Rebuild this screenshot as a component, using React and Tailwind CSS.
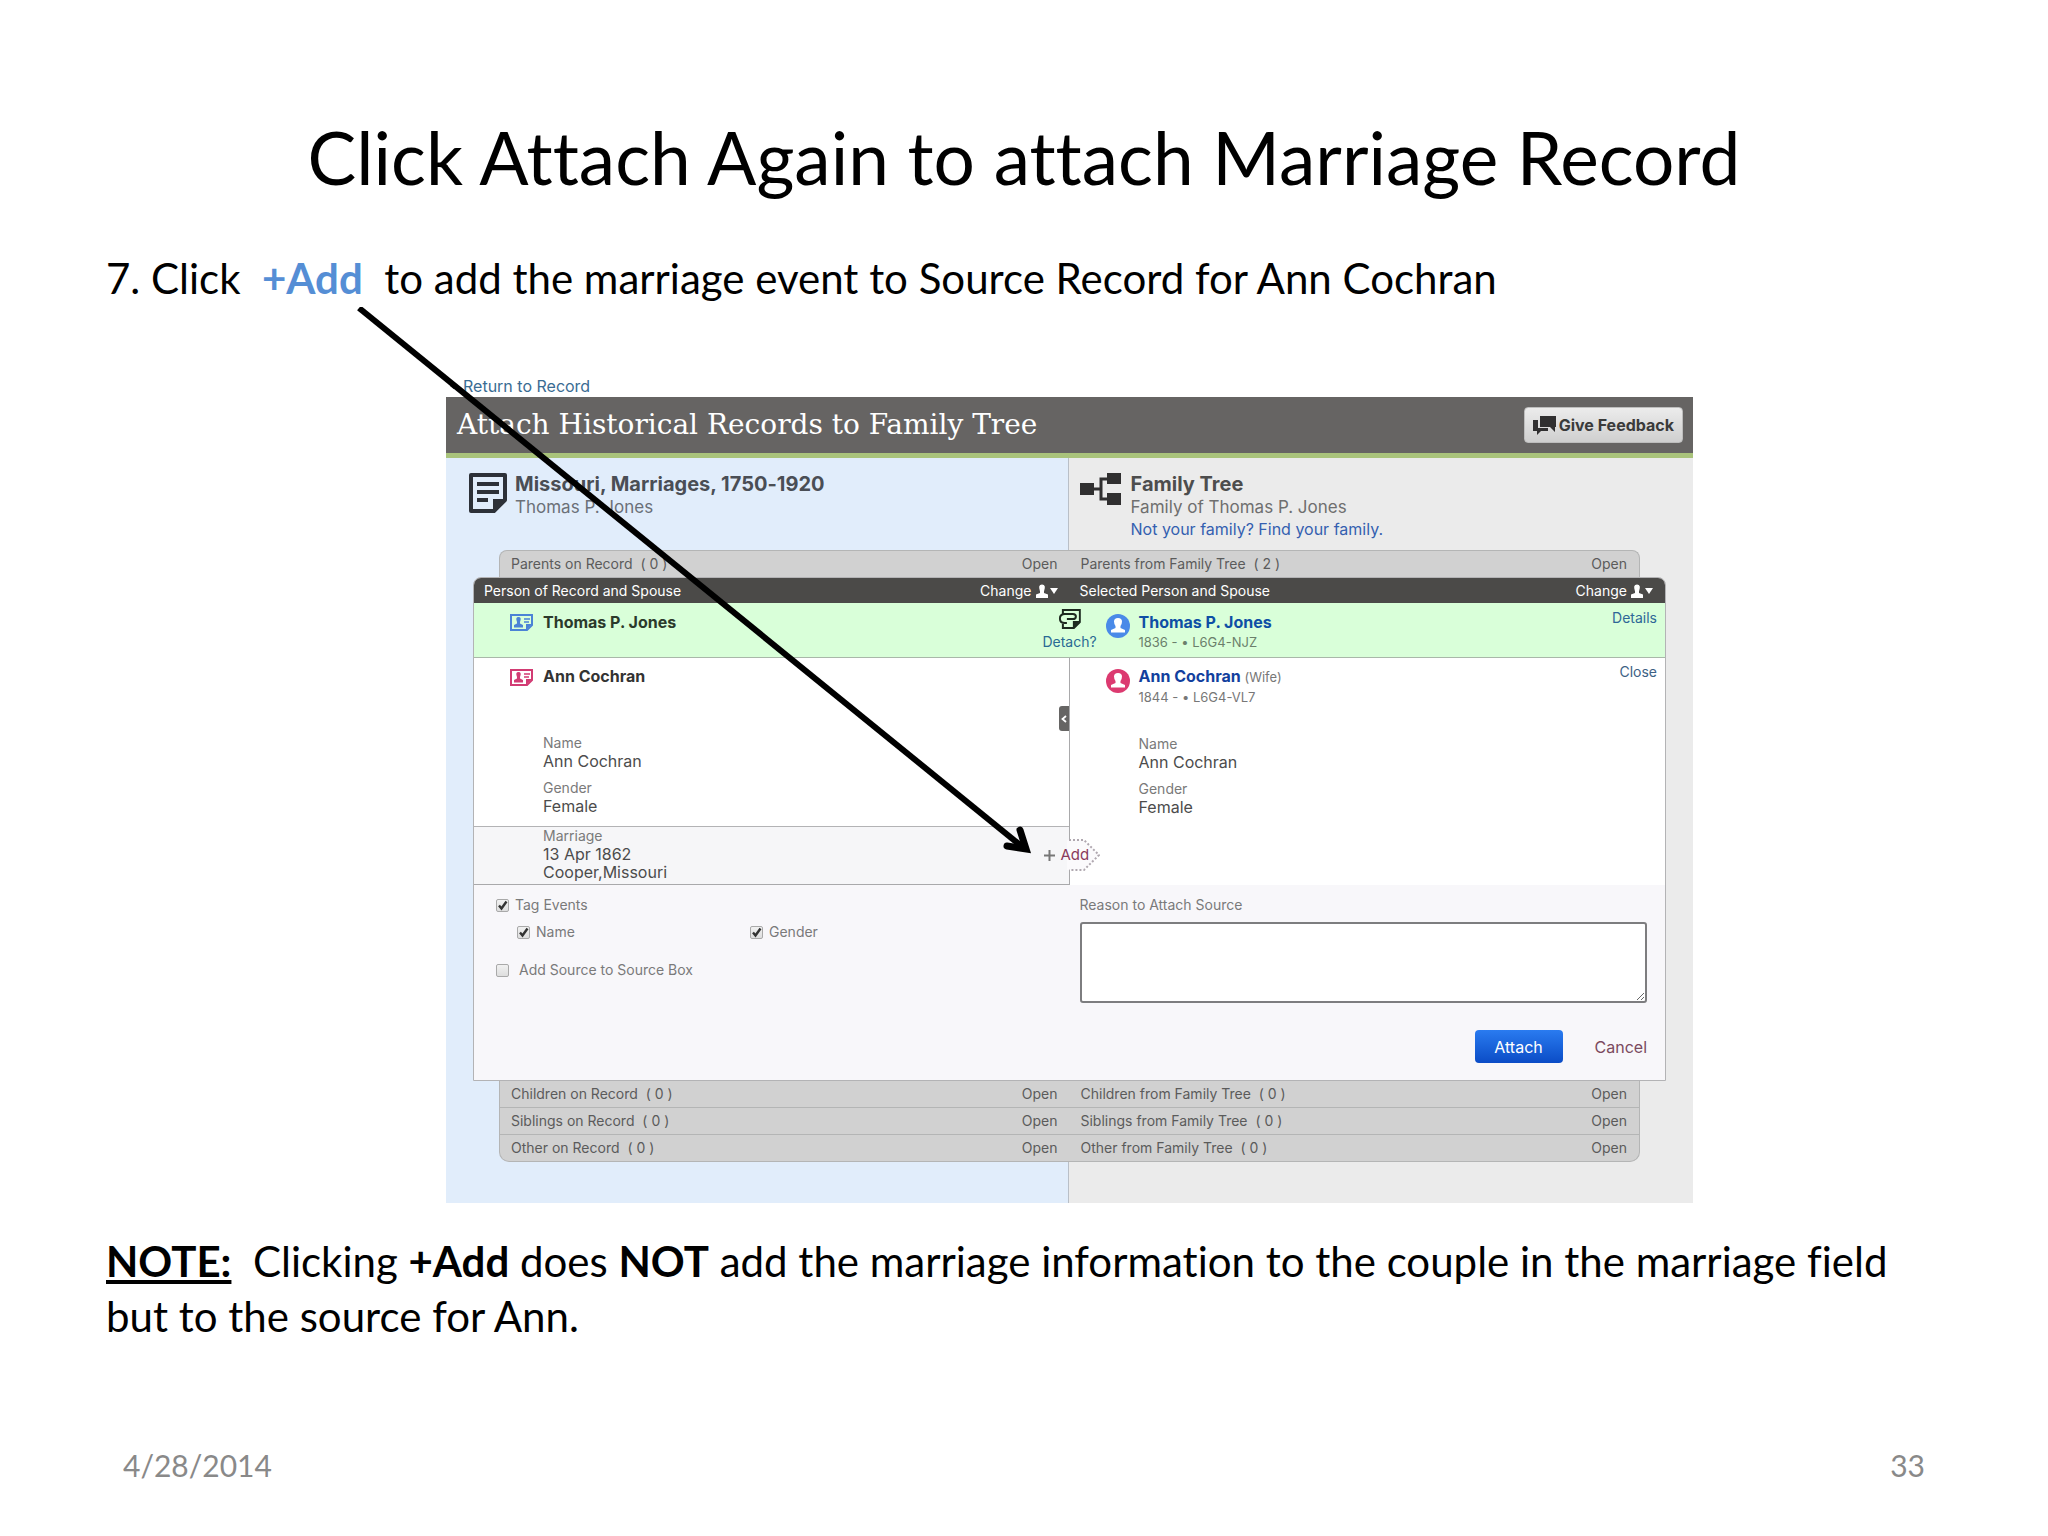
import React from "react";

const SANS = "font-['Inter','Liberation_Sans',sans-serif]";

function RecordIcon({ className }) {
  return (
    <svg viewBox="0 0 38 40" className={className} aria-hidden="true">
      <path d="M2 2h34v25L25 38H2z" fill="none" stroke="#2d3138" strokeWidth="4" strokeLinejoin="round" />
      <path d="M8 11h22M8 19h22M8 27h11" stroke="#2d3138" strokeWidth="4" />
      <path d="M24 39V26h13v2L26 39z" fill="#2d3138" />
    </svg>
  );
}

function TreeIcon({ className }) {
  return (
    <svg viewBox="0 0 41 32" className={className} aria-hidden="true">
      <path d="M12 16h10M28 6h-7v20h7" fill="none" stroke="#302f30" strokeWidth="3" />
      <path d="M0 10h14v12H0zM27 0h14v11H27zM27 20h14v12H27z" fill="#302f30" />
    </svg>
  );
}

function CardIcon({ className }) {
  return (
    <svg viewBox="0 0 23 17" className={className} fill="none" aria-hidden="true">
      <path d="M1 1h21v10l-5 5H1z" stroke="currentColor" strokeWidth="2" />
      <path d="M16 16v-6h6z" fill="currentColor" />
      <path d="M4 13.500v-2.500l3-1.500V8Q5 3 8.500 3T10 8v1.500l3 1.500v2.500z" fill="currentColor" />
      <path d="M14 5h6M14 8h5" stroke="currentColor" strokeWidth="1.500" />
    </svg>
  );
}

function Avatar({ className }) {
  return (
    <svg viewBox="0 0 24 24" className={className} aria-hidden="true">
      <circle cx="12" cy="12" r="12" fill="currentColor" />
      <path d="M5 18.500v-2.500l4.500-2V12Q8 10 8 7.500Q8 4 12 4t4 3.500Q16 10 14.500 12v2l4.500 2v2.500z" fill="#fff" />
    </svg>
  );
}

function DetachIcon({ className }) {
  return (
    <svg viewBox="0 0 22 21" className={className} fill="none" stroke="#1d2a1f" strokeWidth="2" aria-hidden="true">
      <path d="M4 5V1h17v12l-6 6H4v-4" />
      <path d="M16 10H8M4 5h10q3 0 3 2.500T14 10M6 5Q1 5 1 9.500T6 14h2" />
      <path d="M14 20v-8h7z" fill="#1d2a1f" stroke="none" />
    </svg>
  );
}

function PersonMenuIcon({ className }) {
  return (
    <svg viewBox="0 0 22 14" className={className} fill="#fff" aria-hidden="true">
      <path d="M0 14v-3.500l4-1.500V7.500Q1.500 0.500 6 0.500T8 7.500V9l4 1.500V14z" />
      <path d="M14 4h8l-4 6z" />
    </svg>
  );
}

function ChatIcon({ className }) {
  return (
    <svg viewBox="0 0 23 19" className={className} fill="#302f30" aria-hidden="true">
      <path d="M0 4h5v8h10v3H8l-4 4v-4H0z" />
      <path d="M7 0h16v11h-1v5l-5-5H7z" />
    </svg>
  );
}

function ChangeButton() {
  return (
    <button type="button" className="flex items-center gap-1 text-white">
      Change
      <PersonMenuIcon className="h-[14px] w-[22px]" />
    </button>
  );
}

function RelativeRow({ label, count, className }) {
  return (
    <div className={`mx-[53px] grid grid-cols-2 items-center border-x border-[#b4b5b5] bg-[#d1d1d1] text-sm leading-5 text-[#5b5b5b] ${className}`}>
      {["on Record", "from Family Tree"].map((side, i) => (
        <div key={side} className="flex justify-between pr-3 pl-[11px]">
          <span className="whitespace-pre">{`${label} ${side}  ( ${count[i]} )`}</span>
          <button type="button">Open</button>
        </div>
      ))}
    </div>
  );
}

function Fact({ label, children }) {
  return (
    <div>
      <dt className="text-sm leading-[18px] text-[#7a7a7a]">{label}</dt>
      <dd className="text-base leading-[18px] text-[#4c4c4c]">{children}</dd>
    </div>
  );
}

function Check({ label, checked, className = "gap-[6px]" }) {
  return (
    <label className={`flex items-center ${className}`}>
      <span className="relative flex">
        <input
          type="checkbox"
          defaultChecked={checked}
          className="peer h-[13px] w-[13px] appearance-none rounded-[2px] border border-[#a9a9a9] bg-linear-to-b from-[#f1f1f1] to-[#dedede]"
        />
        <svg viewBox="0 0 13 13" className="pointer-events-none absolute inset-0 hidden h-[13px] w-[13px] peer-checked:block" aria-hidden="true">
          <path d="M3 6.500l2.500 3L10.500 2.500" fill="none" stroke="#333" strokeWidth="2.400" />
        </svg>
      </span>
      {label}
    </label>
  );
}

function AttachPanel() {
  return (
    <div className="mx-[27px] overflow-hidden rounded-t-[8px] border border-[#b3b3b5] bg-white">
      <div className="grid h-[25px] grid-cols-2 items-center bg-[#4b4a48] text-sm leading-5 text-white">
        <div className="flex justify-between pr-3 pl-[10px]">
          <span>Person of Record and Spouse</span>
          <ChangeButton />
        </div>
        <div className="flex justify-between pr-3 pl-[10px]">
          <span>Selected Person and Spouse</span>
          <ChangeButton />
        </div>
      </div>

      <div className="relative grid h-[55px] grid-cols-2 border-b border-[#a9b8a9] bg-[#d9ffd9]">
        <div className="flex items-start gap-[10px] pt-[9px] pl-9">
          <CardIcon className="mt-[2px] h-[17px] w-[23px] text-[#4b83d6]" />
          <span className="text-base leading-5 font-bold text-[#2b3a2b]">Thomas P. Jones</span>
        </div>
        <div className="flex items-start pt-[9px] pr-2 pl-9">
          <Avatar className="mt-[2px] h-6 w-6 text-[#4a8ae8]" />
          <div className="ml-[9px]">
            <a href="#thomas" className="block text-base leading-5 font-bold text-[#0e4fa5]">Thomas P. Jones</a>
            <div className="text-[13px] leading-5 text-[#6b7f6b]">1836 - • L6G4-NJZ</div>
          </div>
          <a href="#details" className="ml-auto text-sm leading-3 text-[#2f6797]">Details</a>
        </div>
        <div className="absolute top-[6px] left-1/2 flex -translate-x-1/2 flex-col items-center">
          <DetachIcon className="h-[21px] w-[22px]" />
          <a href="#detach" className="mt-[2px] text-sm leading-5 text-[#2a6a94]">Detach?</a>
        </div>
      </div>

      <div className="grid grid-cols-2">
        <div className="relative border-r border-b border-[#a9a9ab]">
          <div className="flex items-start gap-[10px] pt-[8px] pl-9">
            <CardIcon className="mt-[3px] h-[17px] w-[23px] text-[#d23b73]" />
            <span className="text-base leading-5 font-bold text-[#333]">Ann Cochran</span>
          </div>
          <dl className="mt-[48px] grid gap-[9px] pl-[69px]">
            <Fact label="Name">Ann Cochran</Fact>
            <Fact label="Gender">Female</Fact>
          </dl>
          <dl className="mt-[11px] h-[58px] border-t border-[#b3b3b5] bg-[#f6f6f8] pl-[69px]">
            <Fact label="Marriage">
              13 Apr 1862
              <br />
              Cooper,Missouri
            </Fact>
          </dl>
          <button type="button" aria-label="Collapse" className="absolute top-12 right-0 flex h-[25px] w-[10px] items-center justify-center rounded-l-[3px] bg-[#666564]">
            <svg viewBox="0 0 6 8" className="h-2 w-[6px]" aria-hidden="true">
              <path d="M5 1L1.500 4L5 7" fill="none" stroke="#fff" strokeWidth="1.800" />
            </svg>
          </button>
          <div className="absolute right-[-31px] bottom-[13px] flex h-8 w-[60px] items-center">
            <svg viewBox="0 0 60 32" className="absolute inset-0 h-8 w-[60px]" aria-hidden="true">
              <path d="M27 1H44L59 16L44 31H27z" fill="#fbfafc" />
              <path d="M29 1H44L59 16L44 31H29" fill="none" stroke="#b0a8b0" strokeWidth="2" strokeDasharray="2 2" />
            </svg>
            <button type="button" className="relative flex items-center gap-[6px] pl-1 text-[15px] leading-5 text-[#8a3a5c]">
              <svg viewBox="0 0 11 11" className="h-[11px] w-[11px]" aria-hidden="true">
                <path d="M5.500 0v11M0 5.500h11" stroke="#777" strokeWidth="2" />
              </svg>
              Add
            </button>
          </div>
        </div>
        <div className="pr-2 pl-9">
          <div className="flex items-start pt-[8px]">
            <Avatar className="mt-[3px] h-6 w-6 text-[#dc3a70]" />
            <div className="ml-[9px]">
              <div className="text-[13px] leading-5 text-[#777]">
                <a href="#ann" className="text-base leading-5 font-bold text-[#123f9e]">Ann Cochran</a> (Wife)
              </div>
              <div className="text-[13px] leading-5 text-[#777]">1844 - • L6G4-VL7</div>
            </div>
            <a href="#close" className="ml-auto text-sm leading-3 text-[#3d6184]">Close</a>
          </div>
          <dl className="mt-[28px] grid gap-[9px] pl-[33px]">
            <Fact label="Name">Ann Cochran</Fact>
            <Fact label="Gender">Female</Fact>
          </dl>
        </div>
      </div>

      <form className="grid grid-cols-2 bg-[#f8f7fa] text-sm leading-5 text-[#7a7a7a]">
        <div className="pt-[10px] pl-[22px]">
          <Check label="Tag Events" checked />
          <div className="mt-[7px] flex pl-[21px]">
            <Check label="Name" checked className="w-[233px] gap-[6px]" />
            <Check label="Gender" checked />
          </div>
          <Check label="Add Source to Source Box" checked={false} className="mt-[18px] gap-[10px]" />
        </div>
        <div className="pt-[10px] pr-[18px] pb-[17px] pl-[10px]">
          <label htmlFor="reason" className="block">Reason to Attach Source</label>
          <textarea id="reason" className="mt-[7px] block h-[81px] w-full rounded-[3px] border-2 border-[#7d7d7f] bg-white" />
          <div className="mt-[27px] flex items-center justify-end gap-8">
            <button type="button" className="h-[33px] w-[88px] rounded-[4px] bg-linear-to-b from-[#2a7bf0] to-[#0b4cc6] text-base text-white">Attach</button>
            <button type="button" className="text-base text-[#7b4a5e]">Cancel</button>
          </div>
        </div>
      </form>
    </div>
  );
}

export default function App() {
  return (
    <main className="flex min-h-screen flex-col bg-white font-['Lato','Liberation_Sans',sans-serif] text-[42px] leading-[55px] text-black [font-variant-ligatures:none]">
      <h1 className="mt-[112px] text-center text-[73px] leading-[90px]">Click Attach Again to attach Marriage Record</h1>
      <p className="mt-[49px] ml-[106px]">
        7. Click &nbsp;<b className="text-[#558ed5]">+Add</b>&nbsp; to add the marriage event to Source Record for Ann Cochran
      </p>

      <section className={`relative mt-[69px] mr-[355px] ml-[446px] ${SANS}`}>
        <a href="#record" className="flex h-[22px] items-center gap-[9px] pl-1 text-base leading-[22px] text-[#3a6c93]">
          <svg viewBox="0 0 6 10" className="h-[10px] w-[4px]" aria-hidden="true"><path d="M6 0v10L0 5z" fill="#333" /></svg>
          Return to Record
        </a>
        <header className="flex h-[61px] items-center justify-between border-b-[5px] border-[#a9c37b] bg-[#666463] pr-[10px] pl-[11px]">
          <h2 className="font-['DejaVu_Serif',serif] text-[28px] leading-8 text-white">Attach Historical Records to Family Tree</h2>
          <button type="button" className="flex h-9 items-center gap-[3px] rounded-[4px] border border-[#bdbdbd] bg-linear-to-b from-[#ececec] to-[#cfcfcf] px-2 text-base leading-5 font-bold text-[#3a3a3a]">
            <ChatIcon className="h-[19px] w-[23px]" />
            Give Feedback
          </button>
        </header>

        <div className="bg-[linear-gradient(to_right,#e1edfb_calc(50%-1px),#b9bfc7_calc(50%-1px),#b9bfc7_50%,#ebebeb_50%)] pb-[41px]">
          <div className="grid h-[92px] grid-cols-2">
            <div className="flex items-start pt-[14px] pl-[23px]">
              <RecordIcon className="mt-px h-10 w-[38px]" />
              <div className="ml-2">
                <h3 className="text-xl leading-6 font-bold text-[#4a4e55]">Missouri, Marriages, 1750-1920</h3>
                <div className="text-[17px] leading-[22px] text-[#6b7078]">Thomas P. Jones</div>
              </div>
            </div>
            <div className="flex items-start pt-[14px] pl-[10px]">
              <TreeIcon className="mt-px h-8 w-[41px]" />
              <div className="ml-[10px]">
                <h3 className="text-xl leading-6 font-bold text-[#4d4d4d]">Family Tree</h3>
                <div className="text-[17px] leading-[22px] text-[#6f6f6f]">Family of Thomas P. Jones</div>
                <a href="#find" className="block text-base leading-[22px] text-[#345fb0]">Not your family? Find your family.</a>
              </div>
            </div>
          </div>
          <RelativeRow label="Parents" count={[0, 2]} className="h-[27px] rounded-t-[8px] border-t" />
          <AttachPanel />
          <RelativeRow label="Children" count={[0, 0]} className="h-[27px] border-b" />
          <RelativeRow label="Siblings" count={[0, 0]} className="h-[27px] border-b" />
          <RelativeRow label="Other" count={[0, 0]} className="h-[27px] rounded-b-[10px] border-b" />
        </div>

        <svg viewBox="0 0 680 560" className="pointer-events-none absolute top-[-68px] left-[-90px] h-[560px] w-[680px]" aria-hidden="true">
          <path d="M3 1L669 542" fill="none" stroke="#000" strokeWidth="6" />
          <path d="M664 523L670 542L651 539" fill="none" stroke="#000" strokeWidth="7" strokeLinecap="round" />
        </svg>
      </section>

      <p className="mt-[31px] mr-[140px] ml-[106px]">
        <b className="underline">NOTE:</b>&nbsp; Clicking <b>+Add</b> does <b>NOT</b> add the marriage information to the couple in the marriage field but to the source for Ann.
      </p>

      <footer className="mt-auto mr-[123px] mb-[51px] ml-[123px] flex justify-between text-[30px] leading-10 text-[#898989]">
        <span>4/28/2014</span>
        <span>33</span>
      </footer>
    </main>
  );
}
